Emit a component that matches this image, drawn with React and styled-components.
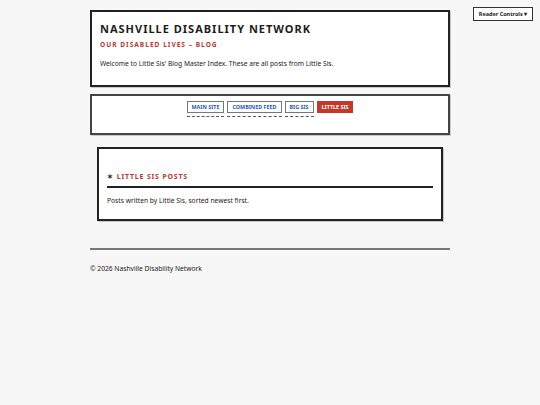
import React from "react";
import styled, { createGlobalStyle } from "styled-components";

const GlobalStyle = createGlobalStyle`
  html, body {
    margin: 0;
    padding: 0;
    background: #f7f7f7;
    font-family: "Noto Sans", "Open Sans", sans-serif;
    color: #222;
  }
`;

const Page = styled.div`
  width: 360px;
  margin: 0 auto;
  padding-top: 10px;
`;

const ReaderButton = styled.button`
  position: fixed;
  top: 7px;
  right: 7px;
  width: 60px;
  height: 14px;
  padding: 0;
  background: #fff;
  border: 1px solid #333;
  font-family: "Noto Sans", sans-serif;
  font-size: 5.5px;
  font-weight: 700;
  color: #222;
`;

const Panel = styled.section`
  background: #fff;
  border: 2px solid ${(p) => p.$border || "#222"};
  box-shadow: 1px 1px 0 #c8c8c8;
  box-sizing: border-box;
  margin: ${(p) => p.$margin || "0"};
  padding: ${(p) => p.$padding || "10px"};
`;

const SiteTitle = styled.h1`
  margin: 0;
  font-size: 11px;
  font-weight: 700;
  letter-spacing: 1px;
  line-height: 14px;
  text-transform: uppercase;
  color: #1d1d1d;
`;

const Tagline = styled.h2`
  margin: 4px 0 0;
  font-size: 6.6px;
  font-weight: 700;
  letter-spacing: 1px;
  line-height: 10px;
  text-transform: uppercase;
  color: #b5392d;
`;

const Text = styled.p`
  margin: ${(p) => p.$margin || "0"};
  font-size: 6.7px;
  line-height: 10px;
  color: #222;
`;

const Nav = styled.nav`
  display: flex;
  justify-content: center;
  gap: 3px;
`;

const NavLink = styled.a`
  display: block;
  position: relative;
  height: 12px;
  box-sizing: border-box;
  padding: 0 4px;
  border: 1px solid ${(p) => (p.$active ? "#c0392b" : "#777")};
  background: ${(p) => (p.$active ? "#c0392b" : "#fff")};
  color: ${(p) => (p.$active ? "#fff" : "#2a5db0")};
  font-size: 5.4px;
  font-weight: 700;
  line-height: 10px;
  text-transform: uppercase;
  text-decoration: none;

  &::after {
    content: "";
    display: ${(p) => (p.$active ? "none" : "block")};
    position: absolute;
    left: -1px;
    right: -1px;
    bottom: -5px;
    border-bottom: 1px dashed #555;
  }
`;

const SectionTitle = styled.h2`
  margin: 0;
  padding-bottom: 4px;
  border-bottom: 2px solid #222;
  font-size: 7px;
  font-weight: 700;
  letter-spacing: 0.8px;
  line-height: 10px;
  text-transform: uppercase;
  color: #b5392d;

  span {
    color: #222;
    margin-right: 3px;
  }
`;

const Rule = styled.hr`
  margin: 27px 0 0;
  border: 0;
  border-top: 2px solid #777;
`;

const Footer = styled.footer`
  padding-top: 14px;
`;

const links = [
  { label: "Main Site" },
  { label: "Combined Feed" },
  { label: "Big Sis" },
  { label: "Little Sis", active: true },
];

export default function App() {
  return (
    <>
      <GlobalStyle />
      <ReaderButton>Reader Controls ▾</ReaderButton>
      <Page>
        <Panel $padding="10px 8px 16px">
          <SiteTitle>Nashville Disability Network</SiteTitle>
          <Tagline>Our Disabled Lives – Blog</Tagline>
          <Text $margin="9px 0 0">
            Welcome to Little Sis' Blog Master Index. These are all posts from Little Sis.
          </Text>
        </Panel>

        <Panel $margin="7px 0 0" $border="#444" $padding="5px 10px 20px">
          <Nav>
            {links.map((link) => (
              <NavLink key={link.label} href="#" $active={link.active}>
                {link.label}
              </NavLink>
            ))}
          </Nav>
        </Panel>

        <Panel $margin="12px 7px 0" $padding="23px 8px 13px">
          <SectionTitle>
            <span>✶</span>Little Sis Posts
          </SectionTitle>
          <Text $margin="8px 0 0">Posts written by Little Sis, sorted newest first.</Text>
        </Panel>

        <Rule />
        <Footer>
          <Text>© 2026 Nashville Disability Network</Text>
        </Footer>
      </Page>
    </>
  );
}
